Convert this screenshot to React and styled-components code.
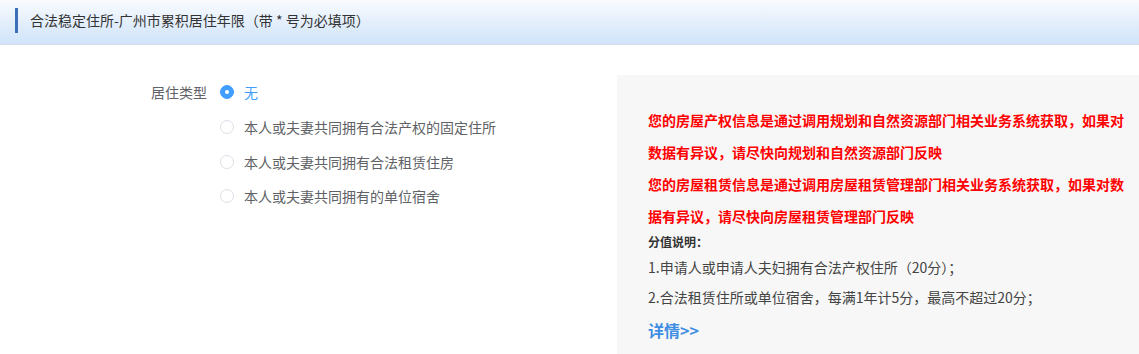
import styled, { createGlobalStyle } from "styled-components";

const GlobalStyle = createGlobalStyle`
  html, body {
    margin: 0;
    padding: 0;
    overflow: hidden;
    background: #fff;
    font-family: "Noto Sans CJK SC", "Liberation Sans", sans-serif;
  }
`;

const Header = styled.div`
  height: 44px;
  display: flex;
  align-items: center;
  padding-left: 15px;
  background: linear-gradient(to bottom, #f9fbfe 0%, #cfe3f9 100%);
  border-bottom: 1px solid #d6dde5;
`;

const HeaderBar = styled.span`
  width: 3px;
  height: 25px;
  margin-top: -4px;
  background: #3d6fb8;
  margin-right: 12px;
`;

const HeaderTitle = styled.span`
  font-size: 14px;
  color: #333;
  margin-top: -4px;
`;

const Body = styled.div`
  display: flex;
  padding-top: 30px;
`;

const FormSide = styled.div`
  flex: 1;
  display: flex;
`;

const Label = styled.div`
  width: 220px;
  padding-right: 13px;
  box-sizing: border-box;
  text-align: right;
  font-size: 14px;
  color: #606266;
  line-height: 35px;
  height: 35px;
`;

const Options = styled.div`
  display: flex;
  flex-direction: column;
`;

const Option = styled.label`
  display: flex;
  align-items: center;
  height: 34.7px;
  font-size: 14px;
  color: ${(p) => (p.checked ? "#409eff" : "#606266")};
  cursor: pointer;
`;

const Radio = styled.span`
  width: 14px;
  height: 14px;
  box-sizing: border-box;
  border-radius: 50%;
  margin-right: 10px;
  display: inline-flex;
  align-items: center;
  justify-content: center;
  border: 1px solid ${(p) => (p.checked ? "#409eff" : "#dcdfe6")};
  background: ${(p) => (p.checked ? "#409eff" : "#fff")};
  &::after {
    content: "";
    width: 4px;
    height: 4px;
    border-radius: 50%;
    background: #fff;
    display: ${(p) => (p.checked ? "block" : "none")};
  }
`;

const InfoPanel = styled.div`
  width: 522px;
  box-sizing: border-box;
  background: #f7f7f7;
  padding: 29px 8px 24px 31px;
`;

const Warning = styled.p`
  margin: 0;
  font-size: 14px;
  font-weight: bold;
  color: #f00;
  line-height: 32px;
  white-space: nowrap;
`;

const ScoreTitle = styled.div`
  font-size: 12px;
  font-weight: bold;
  color: #333;
  line-height: 20px;
`;

const ScoreLine = styled.div`
  font-size: 14px;
  color: #444;
  line-height: 30px;
`;

const More = styled.a`
  display: block;
  margin-top: 3px;
  font-size: 16px;
  font-weight: bold;
  color: #3f8ee2;
  line-height: 30px;
  text-decoration: none;
`;

const options = [
  "无",
  "本人或夫妻共同拥有合法产权的固定住所",
  "本人或夫妻共同拥有合法租赁住房",
  "本人或夫妻共同拥有的单位宿舍",
];

const App = () => {
  return (
    <>
      <GlobalStyle />
      <Header>
        <HeaderBar />
        <HeaderTitle>合法稳定住所-广州市累积居住年限（带 * 号为必填项）</HeaderTitle>
      </Header>
      <Body>
        <FormSide>
          <Label>居住类型</Label>
          <Options>
            {options.map((o, i) => (
              <Option key={o} checked={i === 0}>
                <Radio checked={i === 0} />
                {o}
              </Option>
            ))}
          </Options>
        </FormSide>
        <InfoPanel>
          <Warning>
            您的房屋产权信息是通过调用规划和自然资源部门相关业务系统获取，如果对
            <br />
            数据有异议，请尽快向规划和自然资源部门反映
          </Warning>
          <Warning>
            您的房屋租赁信息是通过调用房屋租赁管理部门相关业务系统获取，如果对数
            <br />
            据有异议，请尽快向房屋租赁管理部门反映
          </Warning>
          <ScoreTitle>分值说明：</ScoreTitle>
          <ScoreLine>1.申请人或申请人夫妇拥有合法产权住所（20分）；</ScoreLine>
          <ScoreLine>2.合法租赁住所或单位宿舍，每满1年计5分，最高不超过20分；</ScoreLine>
          <More href="#">详情&gt;&gt;</More>
        </InfoPanel>
      </Body>
    </>
  );
};

export default App;
